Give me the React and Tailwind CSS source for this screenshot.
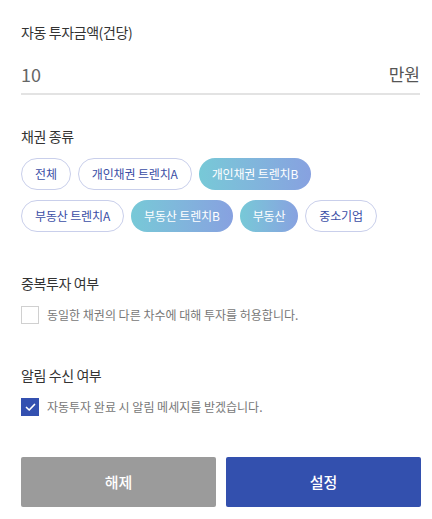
import React from "react";

const font = { fontFamily: '"Noto Sans CJK KR", "Noto Sans", sans-serif' };

function Chip({ label, active }) {
  return (
    <div
      className={
        "h-[32px] px-[13px] rounded-full flex items-center text-[12px] tracking-[-0.15px] whitespace-nowrap " +
        (active
          ? "bg-gradient-to-r from-[#77c9d7] to-[#87a1e0] text-white"
          : "border border-[#c9cfeb] text-[#3b4ea6] bg-white")
      }
    >
      {label}
    </div>
  );
}

export default function App() {
  return (
    <div style={font} className="w-[432px] h-[519px] bg-white pl-[21px] pr-[11px] pt-[22px] text-[#333]">
      <div className="text-[14px] leading-[20px] tracking-[-0.4px] text-[#333]">자동 투자금액(건당)</div>
      <div className="mt-[20px] flex items-center justify-between pb-[7px] border-b-2 border-[#e3e3e3] w-[399px]">
        <span className="text-[18px] leading-[24px] text-[#666]">10</span>
        <span className="text-[17px] leading-[24px] text-[#555]">만원</span>
      </div>

      <div className="mt-[31px] text-[14px] leading-[20px] tracking-[-0.4px]">채권 종류</div>
      <div className="mt-[12px] flex flex-col gap-[10px]">
        <div className="flex gap-[7px]">
          <Chip label="전체" />
          <Chip label="개인채권 트렌치A" />
          <Chip label="개인채권 트렌치B" active />
        </div>
        <div className="flex gap-[7px]">
          <Chip label="부동산 트렌치A" />
          <Chip label="부동산 트렌치B" active />
          <Chip label="부동산" active />
          <Chip label="중소기업" />
        </div>
      </div>

      <div className="mt-[41px] text-[14px] leading-[20px] tracking-[-0.4px]">중복투자 여부</div>
      <div className="mt-[13px] flex items-center gap-[8px]">
        <div className="w-[18px] h-[18px] border border-[#d0d0d0] bg-white" />
        <span className="text-[12px] leading-[18px] text-[#777]">동일한 채권의 다른 차수에 대해 투자를 허용합니다.</span>
      </div>

      <div className="mt-[41px] text-[14px] leading-[20px] tracking-[-0.4px]">알림 수신 여부</div>
      <div className="mt-[13px] flex items-center gap-[8px]">
        <div className="w-[18px] h-[18px] bg-[#3350b0] flex items-center justify-center">
          <svg width="11" height="9" viewBox="0 0 11 9" fill="none">
            <path d="M1.5 4.5 L4.2 7 L9.5 1.5" stroke="white" strokeWidth="1.7" strokeLinecap="round" strokeLinejoin="round" />
          </svg>
        </div>
        <span className="text-[12px] leading-[18px] text-[#777]">자동투자 완료 시 알림 메세지를 받겠습니다.</span>
      </div>

      <div className="mt-[41px] flex gap-[10px]">
        <button className="w-[195px] h-[50px] rounded-[2px] bg-[#9b9b9b] text-white text-[15px] font-medium">해제</button>
        <button className="w-[195px] h-[50px] rounded-[2px] bg-[#3350ae] text-white text-[15px] font-medium">설정</button>
      </div>
    </div>
  );
}
